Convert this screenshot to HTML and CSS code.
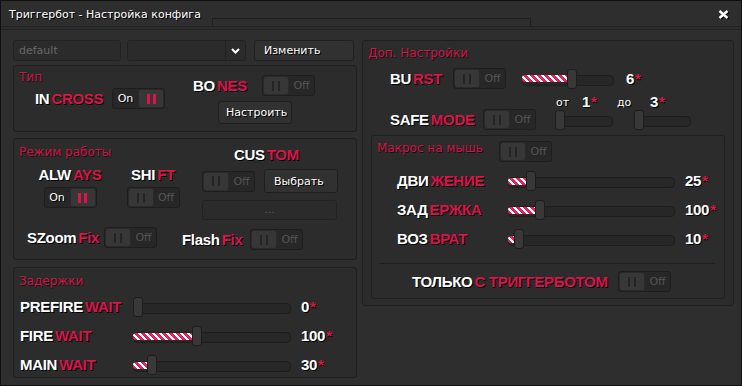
FILE: index.html
```html
<!DOCTYPE html>
<html lang="ru">
<head>
  <meta charset="UTF-8">
  <title>Триггербот - Настройка конфига</title>
  <link rel="stylesheet" href="styles.css">
</head>
<body>
<div class="window">
  <div class="titlebar">
    <span class="title">Триггербот - Настройка конфига</span>
    <span class="tabslot"></span>
    <svg class="close" width="11" height="9" viewBox="0 0 11 9"><path d="M1.5 1 L9.5 8 M9.5 1 L1.5 8" stroke="#000" stroke-width="2.6" transform="translate(1 1)"/><path d="M1.5 1 L9.5 8 M9.5 1 L1.5 8" stroke="#fff" stroke-width="2.4"/></svg>
  </div>

  <div class="content">
    <div class="col-left">
      <div class="toprow">
        <input class="field name" type="text" placeholder="default">
        <div class="select">
          <span class="select-value"></span>
          <span class="select-arrow"><svg width="9" height="6" viewBox="0 0 9 6"><path d="M1 1 L4.5 4.5 L8 1" fill="none" stroke="#fff" stroke-width="2"/></svg></span>
        </div>
        <button class="btn edit">Изменить</button>
      </div>

      <section class="panel p-type">
        <div class="type-left">
          <div class="panel-title">Тип</div>
          <div class="incross">
            <span class="lbl">IN<em>CROSS</em></span>
            <div class="toggle on"><span class="state">On</span><span class="knob"><i class="pause"></i></span></div>
          </div>
        </div>
        <div class="type-right">
          <div class="bones">
            <span class="lbl">BO<em>NES</em></span>
            <div class="toggle off"><span class="knob"><i class="pause"></i></span><span class="state">Off</span></div>
          </div>
          <button class="btn setup">Настроить</button>
        </div>
      </section>

      <section class="panel p-mode">
        <div class="mode-top">
          <div class="mode-left">
            <div class="panel-title">Режим работы</div>
            <div class="groups">
              <div class="group">
                <span class="lbl">ALW<em>AYS</em></span>
                <div class="toggle on"><span class="state">On</span><span class="knob"><i class="pause"></i></span></div>
              </div>
              <div class="group">
                <span class="lbl">SHI<em>FT</em></span>
                <div class="toggle off"><span class="knob"><i class="pause"></i></span><span class="state">Off</span></div>
              </div>
            </div>
          </div>
          <div class="custom">
            <span class="lbl">CUS<em>TOM</em></span>
            <div class="custom-row">
              <div class="toggle off"><span class="knob"><i class="pause"></i></span><span class="state">Off</span></div>
              <button class="btn pick">Выбрать</button>
            </div>
            <div class="field keys">...</div>
          </div>
        </div>
        <div class="mode-bottom">
          <div class="fix szoom">
            <span class="lbl">SZoom<em>Fix</em></span>
            <div class="toggle off"><span class="knob"><i class="pause"></i></span><span class="state">Off</span></div>
          </div>
          <div class="fix flash">
            <span class="lbl">Flash<em>Fix</em></span>
            <div class="toggle off"><span class="knob"><i class="pause"></i></span><span class="state">Off</span></div>
          </div>
        </div>
      </section>

      <section class="panel p-delay">
        <div class="panel-title">Задержки</div>
        <div class="srow">
          <span class="lbl">PREFIRE<em>WAIT</em></span>
          <div class="slider"><span class="fill" style="width:0px"></span><span class="thumb"></span></div>
          <span class="val">0<em>*</em></span>
        </div>
        <div class="srow">
          <span class="lbl">FIRE<em>WAIT</em></span>
          <div class="slider"><span class="fill" style="width:59px"></span><span class="thumb"></span></div>
          <span class="val">100<em>*</em></span>
        </div>
        <div class="srow">
          <span class="lbl">MAIN<em>WAIT</em></span>
          <div class="slider"><span class="fill" style="width:14px"></span><span class="thumb"></span></div>
          <span class="val">30<em>*</em></span>
        </div>
      </section>
    </div>

    <div class="col-right">
      <section class="panel p-extra">
        <div class="panel-title">Доп. Настройки</div>
        <div class="burst">
          <span class="lbl">BU<em>RST</em></span>
          <div class="toggle off"><span class="knob"><i class="pause"></i></span><span class="state">Off</span></div>
          <div class="slider"><span class="fill" style="width:45px"></span><span class="thumb"></span></div>
          <span class="val">6<em>*</em></span>
        </div>
        <div class="safe-caps">
          <span class="cap from">от</span><span class="val cap-v1">1<em>*</em></span><span class="cap to">до</span><span class="val">3<em>*</em></span>
        </div>
        <div class="safe">
          <span class="lbl">SAFE<em>MODE</em></span>
          <div class="toggle off"><span class="knob"><i class="pause"></i></span><span class="state">Off</span></div>
          <div class="slider s-from"><span class="fill" style="width:0px"></span><span class="thumb"></span></div>
          <div class="slider s-to"><span class="fill" style="width:0px"></span><span class="thumb"></span></div>
        </div>

        <section class="panel p-macro">
          <div class="macro-head">
            <div class="panel-title">Макрос на мышь</div>
            <div class="toggle off"><span class="knob"><i class="pause"></i></span><span class="state">Off</span></div>
          </div>
          <div class="srow">
            <span class="lbl">ДВИ<em>ЖЕНИЕ</em></span>
            <div class="slider"><span class="fill" style="width:18px"></span><span class="thumb"></span></div>
            <span class="val">25<em>*</em></span>
          </div>
          <div class="srow">
            <span class="lbl">ЗАД<em>ЕРЖКА</em></span>
            <div class="slider"><span class="fill" style="width:27px"></span><span class="thumb"></span></div>
            <span class="val">100<em>*</em></span>
          </div>
          <div class="srow">
            <span class="lbl">ВОЗ<em>ВРАТ</em></span>
            <div class="slider"><span class="fill" style="width:6px"></span><span class="thumb"></span></div>
            <span class="val">10<em>*</em></span>
          </div>
          <hr class="sep">
          <div class="only">
            <span class="lbl">ТОЛЬКО<em>С ТРИГГЕРБОТОМ</em></span>
            <div class="toggle off"><span class="knob"><i class="pause"></i></span><span class="state">Off</span></div>
          </div>
        </section>
      </section>
    </div>
  </div>
</div>
</body>
</html>
```

FILE: styles.css
```css
* {
  box-sizing: border-box;
}
body {
  margin: 0;
  background: #2e2e2e;
  color: #fff;
  font-family: "DejaVu Sans", Verdana, sans-serif;
}
.window {
  width: 742px;
  height: 386px;
  border: 1px solid #101010;
  background: #2e2e2e;
  overflow: hidden;
}

/* title bar */
.titlebar {
  display: flex;
  height: 26px;
  padding-left: 8px;
  border-bottom: 1px solid #222;
}
.title {
  width: 203px;
  padding-top: 2px;
  font-size: 11px;
  line-height: 23px;
  white-space: nowrap;
  text-shadow: 1px 1px 0 #000;
}
.tabslot {
  align-self: flex-end;
  width: 319px;
  height: 8px;
  border: 1px solid #1e1e1e;
  border-bottom: 0;
}
.close {
  margin: 9px 12px 0 auto;
}

.content {
  display: flex;
  gap: 5px;
  margin-top: 2px;
  padding: 10px 0 0 12px;
  border-top: 1px solid #222;
}
.col-left {
  width: 344px;
  display: flex;
  flex-direction: column;
}
.col-right {
  width: 372px;
}

/* common controls */
.panel {
  border: 1px solid #1f1f1f;
  border-radius: 3px;
  background: #2c2c2c;
}
.panel-title {
  color: #cf1449;
  font-size: 12px;
  line-height: 14px;
  text-shadow: 1px 1px 0 rgba(0, 0, 0, 0.6);
  white-space: nowrap;
}
.lbl, .val {
  font-family: "Liberation Sans", Arial, sans-serif;
  font-weight: bold;
  font-size: 15px;
  letter-spacing: -0.3px;
  line-height: 18px;
  white-space: nowrap;
  text-shadow: 1px 1px 0 #000;
}
.lbl em, .val em {
  font-style: normal;
  color: #d8164c;
}
.lbl em {
  margin-left: 2px;
}
.val em {
  margin-left: 1px;
}
.field {
  height: 21px;
  border: 1px solid #222;
  border-radius: 3px;
  background: #2b2b2b;
  color: #6a6a6a;
  font-family: inherit;
  font-size: 11px;
  padding: 0 5px;
}
.btn {
  height: 21px;
  border: 1px solid #1f1f1f;
  border-radius: 3px;
  background: #313131;
  color: #fff;
  font-family: inherit;
  font-size: 11px;
  text-align: left;
  padding: 0 9px;
  text-shadow: 1px 1px 0 #000;
}

.toggle {
  display: flex;
  width: 53px;
  height: 21px;
  border: 1px solid #1e1e1e;
  border-radius: 3px;
  background: #272727;
  flex-shrink: 0;
}
.toggle .knob {
  display: flex;
  align-items: center;
  justify-content: center;
  width: 26px;
  background: #373737;
  border: 1px solid #2a2a2a;
  border-radius: 3px;
}
.toggle .state {
  flex: 1;
  text-align: center;
  font-size: 11px;
  line-height: 19px;
  color: #555;
}
.toggle.on .state {
  color: #fff;
  text-shadow: 1px 1px 0 #000;
}
.pause {
  width: 8px;
  height: 10px;
  border-left: 2px solid #242424;
  border-right: 2px solid #242424;
}
.toggle.on .pause {
  width: 9px;
  border-left: 3px solid #d8164c;
  border-right: 3px solid #d8164c;
}

.slider {
  position: relative;
  display: flex;
  align-items: center;
  height: 20px;
  flex-shrink: 0;
}
.slider::before {
  content: "";
  position: absolute;
  left: 0;
  right: 0;
  top: 6px;
  height: 9px;
  border: 1px solid #1e1e1e;
  border-radius: 4px;
  background: #272727;
}
.slider .fill {
  position: relative;
  height: 7px;
  border-radius: 3px 0 0 3px;
  background: repeating-linear-gradient(45deg, #e0245c 0 3px, #fff 3px 5px);
}
.slider .thumb {
  position: relative;
  width: 10px;
  height: 20px;
  border: 1px solid #1d1d1d;
  border-radius: 3px;
  background: #383838;
}

/* top row */
.toprow {
  display: flex;
  height: 21px;
}
.field.name {
  width: 108px;
}
.field.name::placeholder {
  color: #686868;
}
.select {
  display: flex;
  width: 119px;
  margin-left: 6px;
  border: 1px solid #222;
  border-radius: 3px;
  background: #2b2b2b;
}
.select-value {
  flex: 1;
}
.select-arrow {
  display: flex;
  align-items: center;
  justify-content: center;
  width: 20px;
  border-left: 1px solid #222;
}
.btn.edit {
  width: 100px;
  margin-left: 8px;
}

/* Тип */
.p-type {
  display: flex;
  height: 67px;
  margin-top: 4px;
  padding: 4px 0 0 5px;
}
.type-left {
  width: 174px;
}
.incross {
  display: flex;
  align-items: center;
  margin: 4px 0 0 16px;
}
.incross .lbl {
  width: 77px;
}
.bones {
  display: flex;
  align-items: center;
  margin-top: 5px;
}
.bones .lbl {
  width: 69px;
}
.btn.setup {
  width: 74px;
  height: 23px;
  margin: 5px 0 0 25px;
  padding: 0 7px;
}

/* Режим работы */
.p-mode {
  height: 122px;
  margin-top: 6px;
  padding: 6px 0 0 5px;
}
.mode-top {
  display: flex;
}
.mode-left {
  width: 183px;
}
.groups {
  display: flex;
  gap: 3px;
  margin: 7px 0 0 11px;
}
.group {
  display: flex;
  flex-direction: column;
  align-items: center;
  width: 80px;
  gap: 3px;
}
.custom {
  width: 136px;
  display: flex;
  flex-direction: column;
}
.custom > .lbl {
  margin: 1px 0 0 32px;
}
.custom-row {
  display: flex;
  align-items: center;
  gap: 9px;
  margin-top: 5px;
}
.btn.pick {
  width: 74px;
  height: 24px;
}
.field.keys {
  width: 135px;
  height: 20px;
  margin-top: 7px;
  text-align: center;
  line-height: 18px;
  color: #5a5a5a;
}
.mode-bottom {
  display: flex;
  align-items: flex-start;
  margin: 7px 0 0 8px;
}
.fix {
  display: flex;
  align-items: center;
}
.szoom .lbl {
  width: 77px;
}
.flash {
  margin: 2px 0 0 25px;
}
.flash .lbl {
  width: 68px;
}

/* Задержки */
.p-delay {
  height: 111px;
  margin-top: 7px;
  padding: 6px 0 0 5px;
}
.p-delay .panel-title {
  margin-bottom: 4px;
}
.srow {
  display: flex;
  align-items: center;
  height: 20px;
  margin-top: 9px;
}
.p-delay .srow:first-of-type {
  margin-top: 0;
}
.p-delay .lbl {
  width: 113px;
  margin-left: 1px;
}
.p-delay .slider {
  width: 158px;
}
.p-delay .val {
  margin-left: 10px;
}

/* Доп. Настройки */
.p-extra {
  height: 266px;
  padding: 5px 0 0 5px;
}
.burst {
  display: flex;
  align-items: center;
  margin: 8px 0 0 22px;
}
.burst .lbl {
  width: 63px;
}
.burst .slider {
  width: 92px;
  margin-left: 16px;
}
.burst .val {
  margin-left: 12px;
}
.safe-caps {
  display: flex;
  align-items: center;
  height: 14px;
  margin: 6px 0 0 188px;
}
.cap {
  font-size: 11px;
  text-shadow: 1px 1px 0 #000;
}
.cap.from {
  width: 26px;
}
.cap-v1 {
  width: 35px;
}
.cap.to {
  width: 33px;
}
.safe {
  display: flex;
  align-items: center;
  height: 21px;
  margin-left: 22px;
}
.safe .lbl {
  width: 93px;
}
.s-from {
  width: 58px;
  margin-left: 19px;
}
.s-to {
  width: 57px;
  margin-left: 21px;
}

/* Макрос на мышь */
.p-macro {
  height: 164px;
  width: 354px;
  margin: 5px 0 0 3px;
  padding: 5px 0 0 5px;
}
.macro-head {
  display: flex;
  align-items: flex-start;
}
.macro-head .panel-title {
  width: 122px;
}
.p-macro .srow:first-of-type {
  margin-top: 10px;
}
.p-macro .srow .lbl {
  width: 111px;
  margin-left: 20px;
}
.p-macro .slider {
  width: 167px;
}
.p-macro .val {
  margin-left: 10px;
}
.sep {
  height: 0;
  margin: 14px 9px 0 3px;
  border: 0;
  border-top: 1px solid #1f1f1f;
}
.only {
  display: flex;
  align-items: center;
  margin: 7px 0 0 35px;
}
.only .lbl {
  width: 206px;
}
```
